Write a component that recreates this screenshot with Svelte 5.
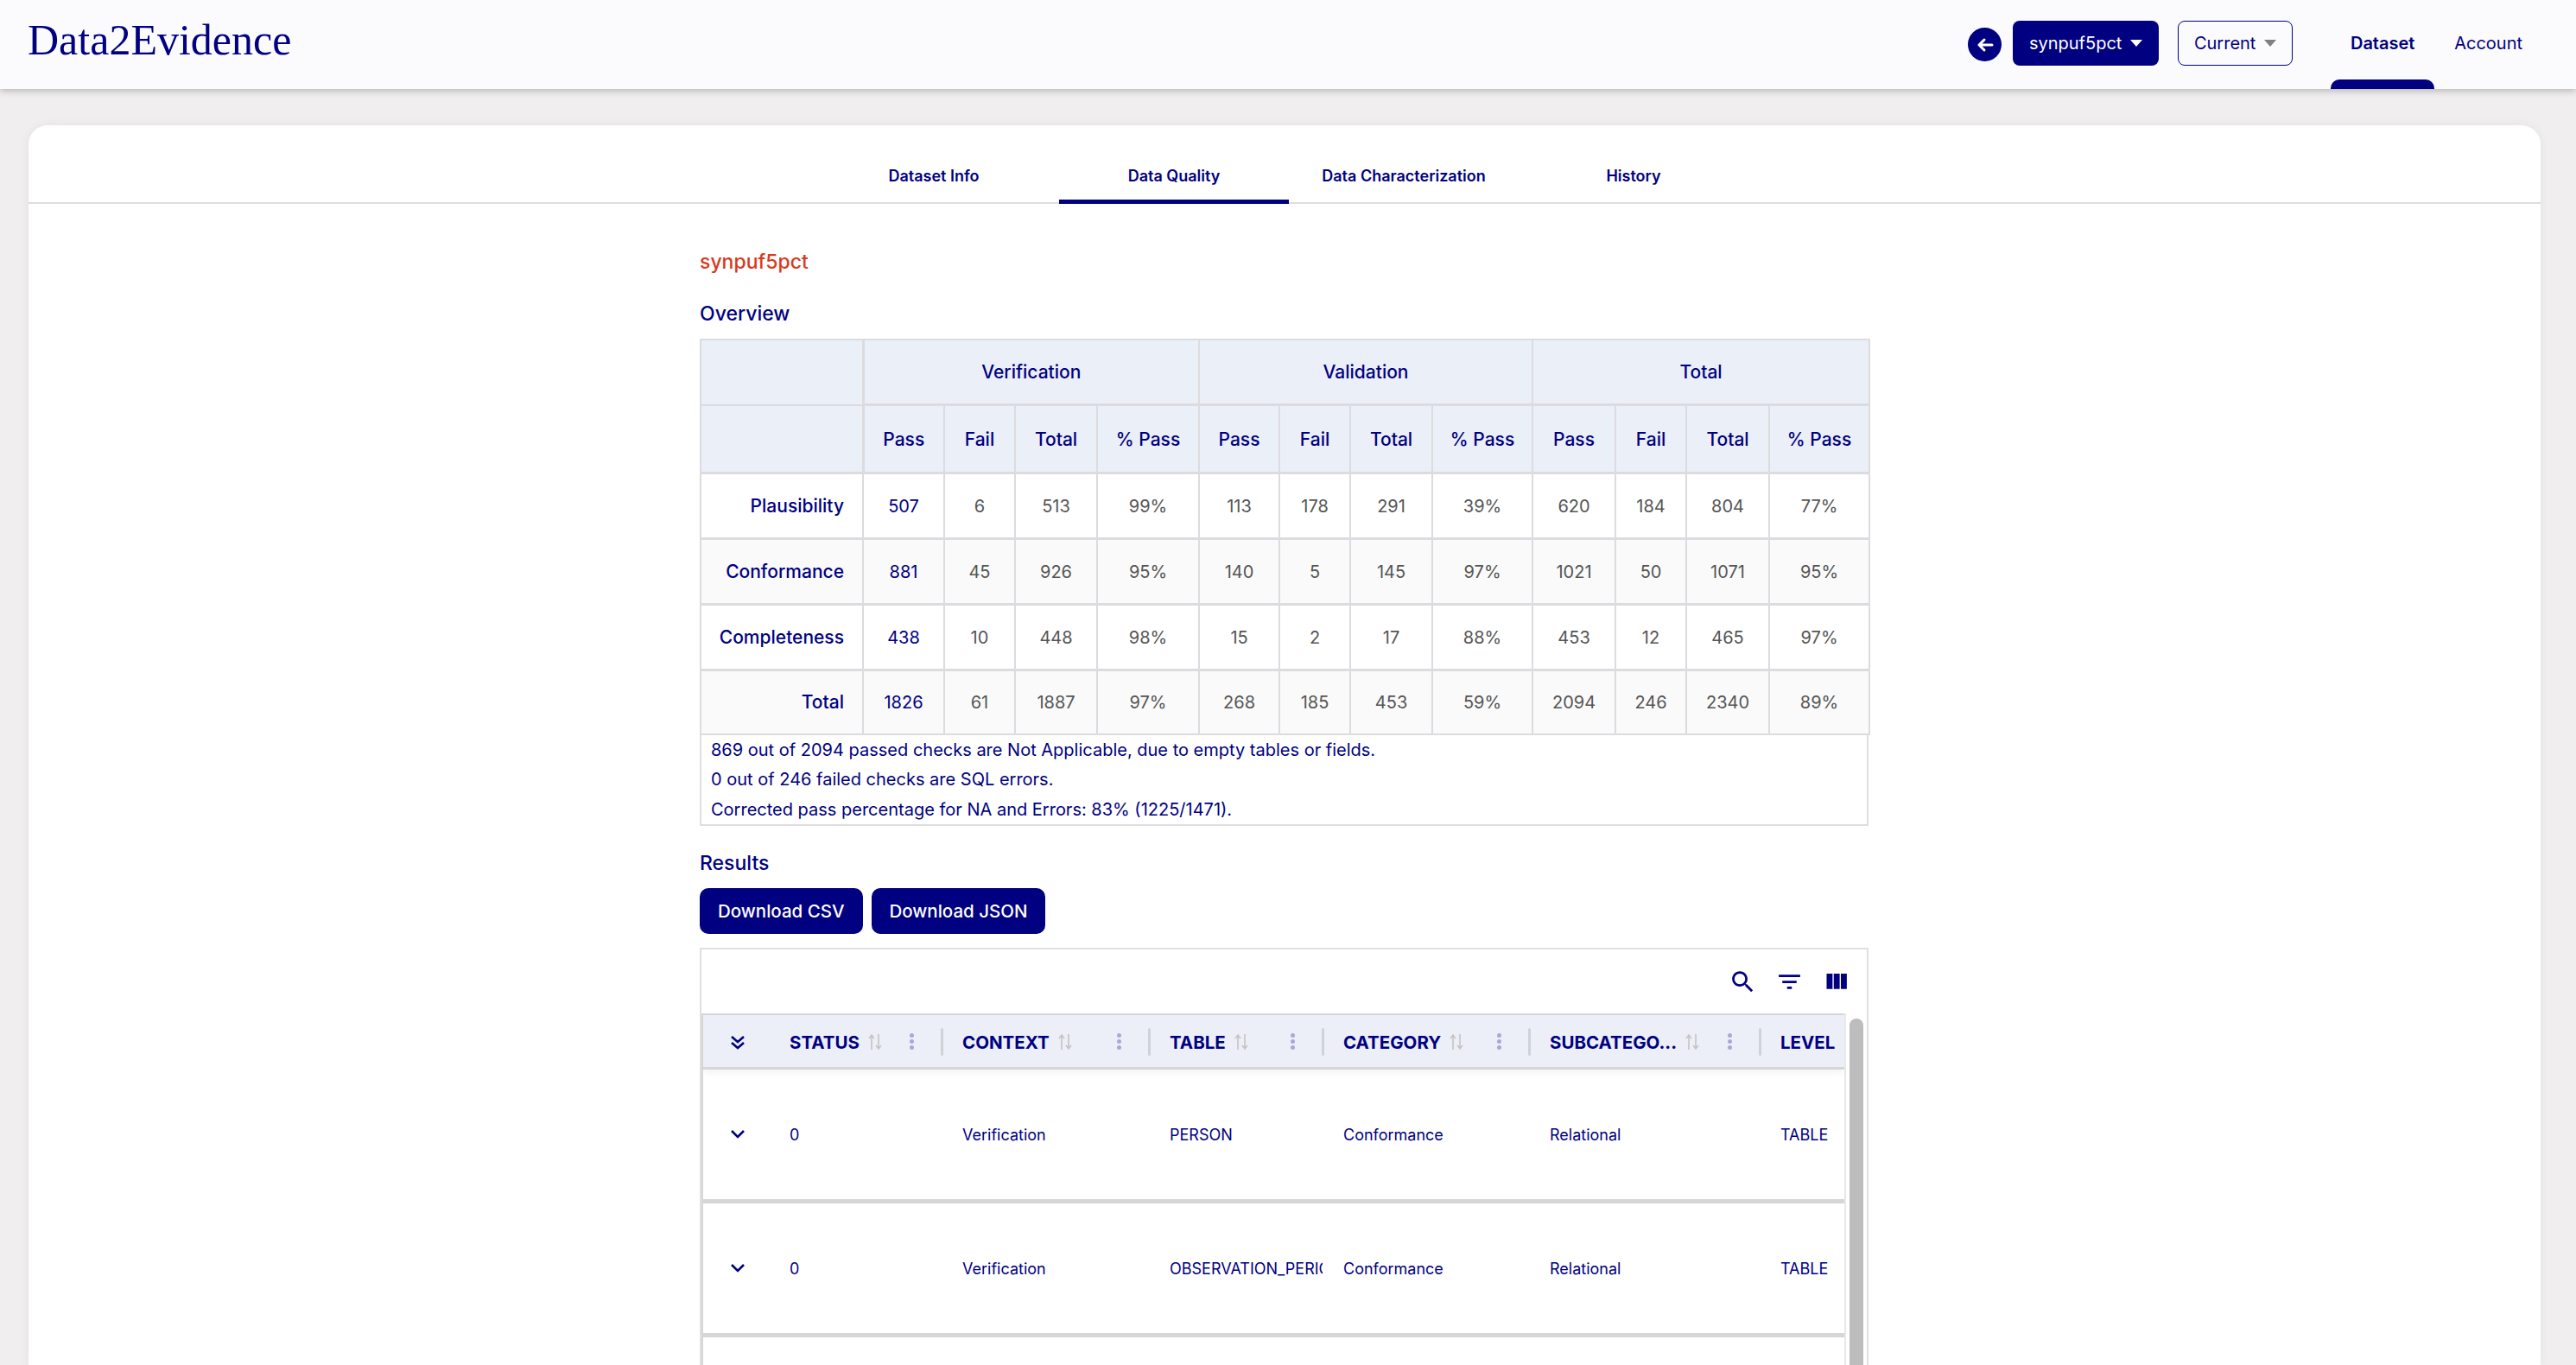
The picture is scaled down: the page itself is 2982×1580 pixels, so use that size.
<script>
  const tabs = [
    ['Dataset Info', false],
    ['Data Quality', true],
    ['Data Characterization', false],
    ['History', false],
  ]

  const colWidths = [188, 94, 82, 95, 118, 93, 82, 95, 116, 96, 82, 96, 116]
  const subHeads = ['Pass', 'Fail', 'Total', '% Pass']

  const overview = [
    ['Plausibility', 507, 6, 513, '99%', 113, 178, 291, '39%', 620, 184, 804, '77%'],
    ['Conformance', 881, 45, 926, '95%', 140, 5, 145, '97%', 1021, 50, 1071, '95%'],
    ['Completeness', 438, 10, 448, '98%', 15, 2, 17, '88%', 453, 12, 465, '97%'],
    ['Total', 1826, 61, 1887, '97%', 268, 185, 453, '59%', 2094, 246, 2340, '89%'],
  ]

  const notes = [
    '869 out of 2094 passed checks are Not Applicable, due to empty tables or fields.',
    '0 out of 246 failed checks are SQL errors.',
    'Corrected pass percentage for NA and Errors: 83% (1225/1471).',
  ]

  const columns = [
    { title: 'STATUS', width: 200 },
    { title: 'CONTEXT', width: 240 },
    { title: 'TABLE', width: 201 },
    { title: 'CATEGORY', width: 239 },
    { title: 'SUBCATEGO...', width: 267 },
    { title: 'LEVEL', width: 98, last: true },
  ]

  const rows = [
    ['0', 'Verification', 'PERSON', 'Conformance', 'Relational', 'TABLE'],
    ['0', 'Verification', 'OBSERVATION_PERIOD', 'Conformance', 'Relational', 'TABLE'],
  ]
</script>

<div class="page">
  <header class="topbar">
    <div class="logo">Data2Evidence</div>
    <div class="top-right">
      <button class="back" aria-label="Back">
        <svg viewBox="0 0 24 24" width="24" height="24"><path d="M20 12H5M11 6l-6 6 6 6" fill="none" stroke="#fff" stroke-width="3" stroke-linecap="round" stroke-linejoin="round" /></svg>
      </button>
      <button class="select primary">synpuf5pct <span class="caret"></span></button>
      <button class="select outline">Current <span class="caret grey"></span></button>
      <nav class="main-nav">
        <a class="active" href="#dataset">Dataset</a>
        <a class="account" href="#account">Account</a>
      </nav>
    </div>
  </header>

  <main class="card">
    <div class="tabs">
      {#each tabs as [label, active], i}
        <div class="tab" class:active class:first={i === 0}>{label}</div>
      {/each}
    </div>

    <section class="content">
      <h2 class="dataset-name">synpuf5pct</h2>
      <h3 class="overview-title">Overview</h3>

      <table>
        <colgroup>
          {#each colWidths as w}
            <col style="width: {w}px" />
          {/each}
        </colgroup>
        <thead>
          <tr class="group-row">
            <th class="corner"></th>
            <th colspan="4">Verification</th>
            <th colspan="4">Validation</th>
            <th colspan="4">Total</th>
          </tr>
          <tr class="sub-row">
            <th class="corner"></th>
            {#each [0, 1, 2] as _}
              {#each subHeads as head}
                <th>{head}</th>
              {/each}
            {/each}
          </tr>
        </thead>
        <tbody>
          {#each overview as [name, ...values]}
            <tr>
              <th class="row-name">{name}</th>
              {#each values as value, i}
                <td class:link={i === 0}>{value}</td>
              {/each}
            </tr>
          {/each}
        </tbody>
      </table>
      <div class="notes">
        {#each notes as note}
          <p>{note}</p>
        {/each}
      </div>

      <h3 class="results-title">Results</h3>
      <div class="downloads">
        <button class="download">Download CSV</button>
        <button class="download">Download JSON</button>
      </div>

      <div class="grid-box">
        <div class="toolbar">
          <svg viewBox="0 0 24 24" width="33" height="33"><path d="M15.5 14h-.79l-.28-.27C15.41 12.59 16 11.11 16 9.5 16 5.91 13.09 3 9.5 3S3 5.91 3 9.5 5.91 16 9.5 16c1.61 0 3.09-.59 4.23-1.57l.27.28v.79l5 4.99L20.49 19l-4.99-5zm-6 0C7.01 14 5 11.99 5 9.5S7.01 5 9.5 5 14 7.01 14 9.5 11.99 14 9.5 14z" /></svg>
          <svg viewBox="0 0 24 24" width="33" height="33"><path d="M10 18h4v-2h-4v2zM3 6v2h18V6H3zm3 7h12v-2H6v2z" /></svg>
          <svg viewBox="0 0 24 24" width="33" height="33"><path d="M10 18h5V5h-5v13zm-6 0h5V5H4v13zM16 5v13h5V5h-5z" /></svg>
        </div>
        <div class="grid-wrap">
          <div class="grid">
            <div class="grid-head">
              <div class="expand-cell">
                <svg viewBox="0 0 24 24" width="24" height="24"><path d="M5 5l7 6 7-6M5 12l7 6 7-6" fill="none" stroke="#000080" stroke-width="2.6" /></svg>
              </div>
              {#each columns as col}
                <div class="head-cell" style="width: {col.width}px">
                  <span class="head-title">{col.title}</span>
                  {#if !col.last}
                    <svg class="sort" viewBox="0 0 16 20" width="16" height="20">
                      <path d="M4 19V3M1 6l3-4 3 4" fill="none" stroke="#c4c4c4" stroke-width="1.6" />
                      <path d="M12 1v16M9 14l3 4 3-4" fill="none" stroke="#c4c4c4" stroke-width="1.6" />
                    </svg>
                    <span class="kebab"><i></i><i></i><i></i></span>
                    <span class="sep"></span>
                  {/if}
                </div>
              {/each}
            </div>
            {#each rows as row}
              <div class="grid-row">
                <div class="expand-cell">
                  <svg viewBox="0 0 24 24" width="24" height="24"><path d="M5 8l7 7 7-7" fill="none" stroke="#000080" stroke-width="2.6" /></svg>
                </div>
                {#each row as cell, i}
                  <div class="cell" style="width: {columns[i].width}px">{cell}</div>
                {/each}
              </div>
            {/each}
          </div>
          <div class="scrollbar"><div class="thumb"></div></div>
        </div>
      </div>
    </section>
  </main>
</div>

<style>
  :global(body) {
    margin: 0;
    background: #f0eeee;
    overflow: hidden;
  }

  .page {
    height: 1580px;
    overflow: hidden;
    font-family: Inter, "Liberation Sans", sans-serif;
    color: #000080;
    display: flex;
    flex-direction: column;
  }

  button {
    font-family: inherit;
    cursor: pointer;
  }

  .topbar {
    flex: none;
    height: 103px;
    background: #fbfbfe;
    box-shadow: 0 2px 8px rgba(0, 0, 0, 0.25);
    display: flex;
    justify-content: space-between;
    padding: 0 0 0 32px;
    position: relative;
    z-index: 1;
  }

  .logo {
    font-family: "Liberation Serif", serif;
    font-size: 50px;
    line-height: 92px;
  }

  .top-right {
    display: flex;
    align-items: flex-start;
    padding-top: 24px;
  }

  .back {
    width: 39px;
    height: 39px;
    margin-top: 8px;
    margin-right: 13px;
    border-radius: 50%;
    border: none;
    padding: 0;
    background: #000080;
    display: flex;
    align-items: center;
    justify-content: center;
  }

  .select {
    height: 52px;
    border-radius: 8px;
    font-size: 20px;
    padding: 0;
    display: flex;
    align-items: center;
    justify-content: center;
    gap: 10px;
  }

  .primary {
    width: 169px;
    background: #000080;
    color: #fff;
    border: none;
    margin-right: 22px;
  }

  .outline {
    width: 133px;
    background: transparent;
    color: #000080;
    border: 1.5px solid #000080;
  }

  .caret {
    width: 0;
    height: 0;
    border-left: 7px solid transparent;
    border-right: 7px solid transparent;
    border-top: 8px solid #fff;
  }

  .caret.grey {
    border-top-color: #808080;
  }

  .main-nav {
    display: flex;
    margin-left: 44px;
    margin-right: 41px;
    height: 79px;
  }

  .main-nav a {
    color: #000080;
    text-decoration: none;
    font-size: 20px;
    line-height: 52px;
    padding: 0 21px;
    position: relative;
  }

  .main-nav a.account {
    padding-left: 23px;
  }

  .main-nav a.active {
    font-weight: 600;
    width: 78px;
    padding: 0 21px;
    text-align: center;
  }

  .main-nav a.active::after {
    content: '';
    position: absolute;
    left: 0;
    right: 0;
    bottom: 0;
    height: 11px;
    background: #000080;
    border-radius: 10px 10px 0 0;
  }

  .card {
    flex: 1;
    margin: 42px 41px 0 33px;
    background: #fff;
    border-radius: 22px 22px 0 0;
    box-shadow: 0 0 12px rgba(0, 0, 0, 0.06);
    min-height: 0;
    overflow: hidden;
  }

  .tabs {
    height: 91px;
    border-bottom: 2px solid #dedede;
    box-sizing: border-box;
    display: flex;
    padding-left: 903px;
  }

  .tab {
    width: 266px;
    box-sizing: border-box;
    font-size: 18px;
    font-weight: 600;
    text-align: center;
    line-height: 118px;
    height: 91px;
    white-space: nowrap;
  }

  .tab.first {
    width: 290px;
  }

  .tab.active {
    border-bottom: 5px solid #000080;
  }

  .content {
    width: 1353px;
    margin-left: 777px;
  }

  .dataset-name {
    margin: 52px 0 0;
    color: #d9391c;
    font-size: 23px;
    font-weight: 500;
    line-height: 30px;
  }

  .overview-title,
  .results-title {
    margin: 0;
    font-size: 23px;
    font-weight: 500;
    line-height: 30px;
  }

  .overview-title {
    margin-top: 30px;
    margin-bottom: 14px;
  }

  table {
    border-collapse: collapse;
    table-layout: fixed;
    width: 1353px;
    font-size: 20px;
  }

  th, td {
    border: 2px solid #dcdce0;
    text-align: center;
    padding: 0;
  }

  th {
    font-size: 21px;
  }

  thead th {
    background: #ebeff7;
    font-weight: 500;
  }

  .group-row th {
    height: 73px;
    border-bottom-width: 3px;
  }

  .sub-row th {
    height: 76px;
    border-bottom-width: 3px;
  }

  thead th.corner {
    border-right-width: 3px;
  }

  .group-row .corner {
    border-bottom-width: 2px;
  }

  tbody tr {
    height: 76px;
  }

  tbody tr:last-child {
    height: 74px;
  }

  tbody tr:nth-child(even) {
    background: #fafafa;
  }

  tbody td {
    color: #555;
    border-bottom-width: 3px;
  }

  tbody tr:last-child td,
  tbody tr:last-child th {
    border-bottom-width: 2px;
  }

  tbody td.link {
    color: #000080;
  }

  .row-name {
    text-align: right;
    padding-right: 21px;
    font-weight: 500;
    border-bottom-width: 3px;
  }

  .notes {
    border: 2px solid #dedee2;
    border-top: none;
    box-sizing: border-box;
    padding: 0 0 0 11px;
    font-size: 20px;
    line-height: 34.6px;
  }

  .notes p {
    margin: 0;
  }

  .results-title {
    margin-top: 28px;
    margin-bottom: 14px;
  }

  .downloads {
    display: flex;
    gap: 10px;
    margin-bottom: 16px;
  }

  .download {
    height: 53px;
    border: none;
    border-radius: 10px;
    background: #000080;
    color: #fff;
    font-size: 20.5px;
    font-weight: 500;
    padding: 0 21px;
  }

  .grid-box {
    border: 2px solid #e0e0e0;
    box-sizing: border-box;
    width: 1353px;
    height: 600px;
  }

  .toolbar {
    height: 74px;
    display: flex;
    justify-content: flex-end;
    align-items: center;
    gap: 21px;
    padding-right: 19px;
    box-sizing: border-box;
  }

  .toolbar svg {
    fill: #000080;
  }

  .grid-wrap {
    display: flex;
    height: 500px;
  }

  .grid {
    width: 1321px;
    border-left: 2px solid #d6d6d6;
    overflow: hidden;
    box-sizing: content-box;
    flex: none;
  }

  .grid-head {
    display: flex;
    height: 65px;
    box-sizing: border-box;
    background: #eceff7;
    border-top: 2px solid #d6d6d6;
    border-bottom: 3px solid #d6d6d6;
    box-shadow: 0 3px 8px rgba(0, 0, 0, 0.06);
  }

  .grid-head .expand-cell {
    padding-top: 3px;
  }

  .expand-cell {
    width: 76px;
    flex: none;
    display: flex;
    align-items: center;
    padding-left: 28px;
    box-sizing: border-box;
  }

  .head-cell {
    flex: none;
    box-sizing: border-box;
    display: flex;
    align-items: center;
    padding-left: 24px;
    padding-top: 2px;
    position: relative;
  }

  .head-title {
    font-size: 20.5px;
    font-weight: 700;
    white-space: nowrap;
  }

  .sort {
    margin-left: 10px;
  }

  .kebab {
    position: absolute;
    right: 32px;
    top: 21px;
    display: flex;
    flex-direction: column;
    gap: 2px;
  }

  .kebab i {
    width: 5px;
    height: 5px;
    border-radius: 50%;
    background: #a9a9d8;
  }

  .sep {
    position: absolute;
    right: -2px;
    top: 15px;
    width: 3px;
    height: 32px;
    border-radius: 2px;
    background: #d0d2d8;
  }

  .grid-row {
    display: flex;
    height: 150px;
    box-sizing: content-box;
    border-bottom: 5px solid #d6d6d6;
  }

  .cell {
    flex: none;
    box-sizing: border-box;
    display: flex;
    align-items: center;
    padding-left: 24px;
    font-size: 18px;
    overflow: hidden;
    white-space: nowrap;
  }

  .scrollbar {
    flex: 1;
    border-left: 2px solid #e8e8e8;
    padding-top: 6px;
    display: flex;
    justify-content: center;
  }

  .thumb {
    width: 16px;
    height: 600px;
    border-radius: 8px;
    background: #bdbdbd;
  }
</style>
